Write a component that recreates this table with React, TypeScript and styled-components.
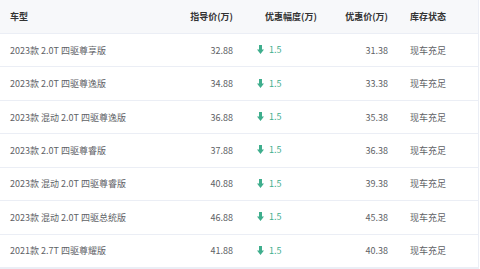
import React from "react"
import styled, { createGlobalStyle } from "styled-components"

type Row = {
  model: string
  guide: string
  discount: string
  price: string
  stock: string
}

const rows: Row[] = [
  { model: "2023款 2.0T 四驱尊享版", guide: "32.88", discount: "1.5", price: "31.38", stock: "现车充足" },
  { model: "2023款 2.0T 四驱尊逸版", guide: "34.88", discount: "1.5", price: "33.38", stock: "现车充足" },
  { model: "2023款 混动 2.0T 四驱尊逸版", guide: "36.88", discount: "1.5", price: "35.38", stock: "现车充足" },
  { model: "2023款 2.0T 四驱尊睿版", guide: "37.88", discount: "1.5", price: "36.38", stock: "现车充足" },
  { model: "2023款 混动 2.0T 四驱尊睿版", guide: "40.88", discount: "1.5", price: "39.38", stock: "现车充足" },
  { model: "2023款 混动 2.0T 四驱总统版", guide: "46.88", discount: "1.5", price: "45.38", stock: "现车充足" },
  { model: "2021款 2.7T 四驱尊耀版", guide: "41.88", discount: "1.5", price: "40.38", stock: "现车充足" },
]

const GlobalStyle = createGlobalStyle`
  html, body {
    margin: 0;
    padding: 0;
    background: #ffffff;
  }
  body {
    font-family: "Noto Sans CJK SC", "Noto Sans", sans-serif;
  }
`

const Wrapper = styled.div`
  width: 478px;
  border-right: 1px solid #ebeef5;
  border-bottom: 1px solid #ebeef5;
`

const Table = styled.table`
  width: 100%;
  border-collapse: collapse;
  table-layout: fixed;
  font-size: 9px;
`

const Head = styled.th<{ $align?: "left" | "right"; $pad?: number }>`
  height: 33px;
  padding: 0 10px 0 ${({ $pad }) => $pad ?? 10}px;
  background: #f7f8fa;
  border-bottom: 1px solid #ebeef5;
  color: #333333;
  font-weight: 600;
  text-align: ${({ $align }) => $align ?? "left"};
  white-space: nowrap;
`

const Cell = styled.td<{ $align?: "left" | "right"; $pad?: number }>`
  height: 32.43px;
  padding: 0 10px 0 ${({ $pad }) => $pad ?? 10}px;
  border-bottom: 1px solid #ebeef5;
  color: #606266;
  text-align: ${({ $align }) => $align ?? "left"};
  white-space: nowrap;
`

const Drop = styled.span`
  display: inline-flex;
  align-items: center;
  gap: 5px;
  color: #3fae8d;
`

function DownArrow() {
  return (
    <svg width="7" height="9" viewBox="0 0 7 9">
      <path d="M2 0h3v4.5h2L3.5 9 0 4.5h2z" fill="#3fae8d" />
    </svg>
  )
}

export default function App() {
  return (
    <>
      <GlobalStyle />
      <Wrapper>
        <Table>
          <colgroup>
            <col style={{ width: 170 }} />
            <col style={{ width: 73 }} />
            <col style={{ width: 87 }} />
            <col style={{ width: 68 }} />
            <col />
          </colgroup>
          <thead>
            <tr>
              <Head>车型</Head>
              <Head $align="right">指导价(万)</Head>
              <Head $pad={22}>优惠幅度(万)</Head>
              <Head $align="right">优惠价(万)</Head>
              <Head $pad={12}>库存状态</Head>
            </tr>
          </thead>
          <tbody>
            {rows.map((r) => (
              <tr key={r.model}>
                <Cell>{r.model}</Cell>
                <Cell $align="right">{r.guide}</Cell>
                <Cell $pad={14}>
                  <Drop>
                    <DownArrow />
                    {r.discount}
                  </Drop>
                </Cell>
                <Cell $align="right">{r.price}</Cell>
                <Cell $pad={12}>{r.stock}</Cell>
              </tr>
            ))}
          </tbody>
        </Table>
      </Wrapper>
    </>
  )
}
